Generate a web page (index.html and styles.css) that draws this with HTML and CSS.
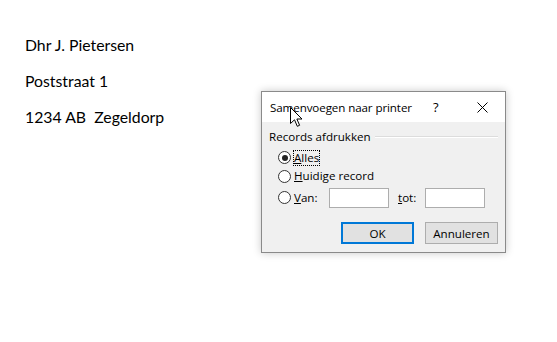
FILE: index.html
```html
<!DOCTYPE html>
<html>
<head>
<meta charset="utf-8">
<link rel="stylesheet" href="styles.css">
</head>
<body>
<div class="doc">
  <p class="line">Dhr J. Pietersen</p>
  <p class="line">Poststraat 1</p>
  <p class="line">1234 AB&nbsp; Zegeldorp</p>
</div>
<div class="dialog">
  <div class="titlebar">
    <span class="title">Samenvoegen naar printer</span>
    <span class="help">?</span>
    <svg class="close" width="11" height="11" viewBox="0 0 11 11"><path d="M0.5 0.5L10.5 10.5M10.5 0.5L0.5 10.5" stroke="#000" stroke-width="1" fill="none"/></svg>
  </div>
  <div class="body">
    <div class="group">
      <span class="glabel">Records afdrukken</span>
      <span class="gline"></span>
    </div>
    <div class="opts">
      <div class="opt">
        <span class="radio checked"></span>
        <span class="lbl focus"><u>A</u>lles</span>
      </div>
      <div class="opt">
        <span class="radio"></span>
        <span class="lbl"><u>H</u>uidige record</span>
      </div>
      <div class="opt van">
        <span class="radio"></span>
        <span class="lbl vanlbl"><u>V</u>an:</span>
        <span class="input"></span>
        <span class="lbl totlbl"><u>t</u>ot:</span>
        <span class="input"></span>
      </div>
    </div>
    <div class="buttons">
      <span class="btn default">OK</span>
      <span class="btn">Annuleren</span>
    </div>
  </div>
  <svg class="cursor" width="14" height="21" viewBox="0 0 14 21"><path d="M0.5 0.5L0.5 16.5L4.5 12.8L7.3 19.3L9.6 18.3L6.9 12L12 12Z" fill="#fff" stroke="#000" stroke-width="1" stroke-linejoin="miter"/></svg>
</div>
</body>
</html>
```
FILE: styles.css
```css
html, body { margin: 0; padding: 0; background: #fff; }
body { width: 557px; height: 342px; position: relative; overflow: hidden; }
.doc { padding: 35px 0 0 25px; font-family: Lato, "Open Sans", sans-serif; font-size: 15.8px; color: #000; }
.line { margin: 0 0 17px 0; line-height: 19px; height: 19px; white-space: nowrap; }
.dialog {
  position: absolute; left: 261px; top: 91px; width: 243px; height: 160px;
  border: 1px solid #8a8a8a; background: #f0f0f0;
  box-shadow: 0 0 8px rgba(0,0,0,0.22);
  font-family: "Open Sans", "Noto Sans", sans-serif; font-size: 11.6px; color: #000;
}
.titlebar { height: 30px; background: #fff; display: flex; align-items: center; position: relative; }
.title { margin-left: 8px; letter-spacing: -0.1px; }
.help { position: absolute; left: 171px; top: 6px; font-size: 13px; }
.close { position: absolute; left: 215px; top: 10px; }
.body { padding: 6px 7px 0 7px; }
.group { display: flex; align-items: center; height: 16px; }
.glabel { white-space: nowrap; }
.gline { flex: 1; height: 0; border-top: 1px solid #dcdcdc; border-bottom: 1px solid #fff; margin-left: 4px; margin-top: 2px; }
.opts { padding-left: 9px; padding-top: 4px; }
.opt { display: flex; align-items: center; height: 19px; white-space: nowrap; }
.opt:nth-child(2) { height: 18px; }
.opt.van { height: 23px; margin-top: 1px; }
.radio { width: 11px; height: 11px; border: 1px solid #333; border-radius: 50%; background: #fff; box-sizing: content-box; position: relative; margin-right: 3px; flex: none; }
.radio.checked::after { content: ""; position: absolute; left: 2.5px; top: 2.5px; width: 6px; height: 6px; border-radius: 50%; background: #222; }
.lbl { line-height: 14px; }
.focus { outline: 1px dotted #000; outline-offset: 0; }
.vanlbl { width: 35px; flex: none; }
.input { width: 58px; height: 18px; border: 1px solid #adadad; background: #fff; flex: none; }
.totlbl { width: 27px; margin-left: 9px; flex: none; }
.buttons { display: flex; justify-content: flex-end; gap: 11px; padding-right: 0; margin-top: 13px; }
.btn { width: 71px; height: 20px; border: 1px solid #adadad; background: #e1e1e1; display: flex; align-items: center; justify-content: center; }
.btn.default { border: 2px solid #0078d7; width: 69px; height: 18px; }
.cursor { position: absolute; left: 28px; top: 15px; }
```
